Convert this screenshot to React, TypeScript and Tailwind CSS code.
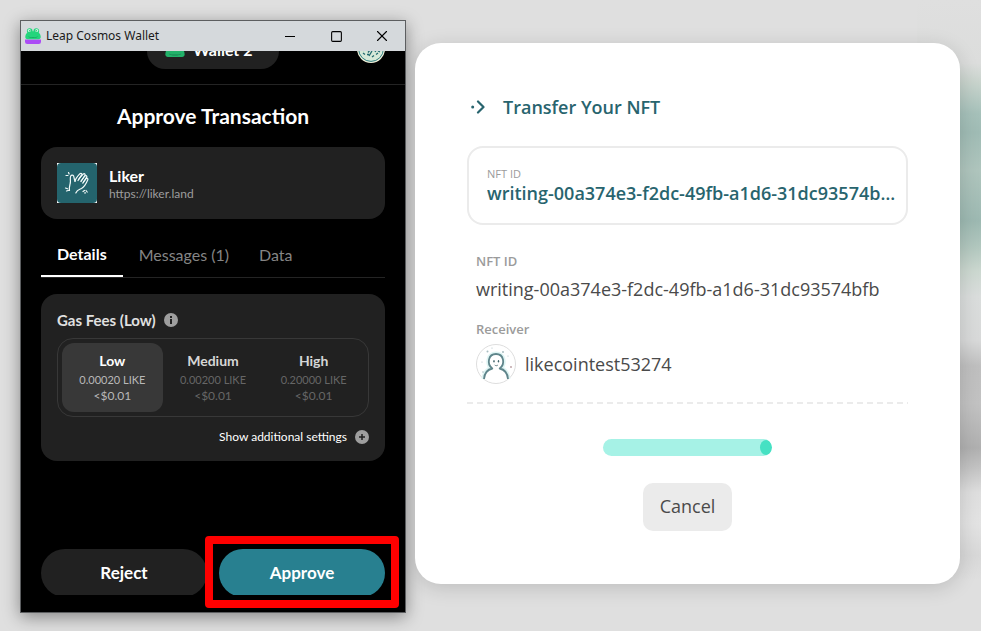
import React from "react";
import { Square, X } from "lucide-react";

const FEES = [
  { name: "Low", amount: "0.00020 LIKE", usd: "<$0.01" },
  { name: "Medium", amount: "0.00200 LIKE", usd: "<$0.01" },
  { name: "High", amount: "0.20000 LIKE", usd: "<$0.01" },
];

const TABS = ["Details", "Messages (1)", "Data"];

function FrogHead() {
  return (
    <g>
      <circle cx="4.7" cy="3" r="2.8" fill="#23d57c" />
      <circle cx="11.3" cy="3" r="2.8" fill="#23d57c" />
      <path d="M.3 9C.3 5.200 3 3.200 8 3.200S15.700 5.200 15.700 9c0 1.400-.8 2.200-2 2.200H2.300C1.100 11.200.3 10.400.3 9Z" fill="#23d57c" />
      <circle cx="4.300" cy="2.600" r="1.500" fill="#c9fbe2" />
      <circle cx="11.700" cy="2.600" r="1.500" fill="#c9fbe2" />
      <circle cx="4.800" cy="2.700" r=".7" fill="#23a566" />
      <circle cx="11.200" cy="2.700" r=".7" fill="#23a566" />
      <path d="M3 8.300C5 9.600 11 9.600 13 8.300c-.5 2.200-9.500 2.200-10 0Z" fill="#169c5c" />
    </g>
  );
}

function LeapLogo() {
  return (
    <svg viewBox="0 0 16 16" className="size-4" aria-hidden="true">
      <path d="M0 11.600h16v2.200a2.200 2.200 0 0 1-2.200 2.200H2.200A2.200 2.200 0 0 1 0 13.800Z" fill="#ab4cf5" />
      <FrogHead />
    </svg>
  );
}

function WalletIcon() {
  return (
    <svg viewBox="0 0 16 11.200" className="h-[14px] w-5" aria-hidden="true">
      <g opacity=".8">
        <FrogHead />
      </g>
    </svg>
  );
}

function LikerIcon() {
  return (
    <svg viewBox="0 0 40 40" className="size-10 shrink-0" aria-hidden="true">
      <rect width="40" height="40" fill="#fff" />
      <rect width="40" height="40" rx="4" fill="#24646d" />
      <g fill="none" stroke="#f3fbfa" strokeWidth="1.200" strokeLinecap="round" strokeLinejoin="round">
        <path d="M12.500 27.500c-.6-2.500.2-5 .8-7.500.5-2.500-.6-5 .4-7 .7-1.200 2.200-1.300 2.800-.2.700 1.400.6 3.700 1.500 5.200" />
        <path d="M18 18.500c.4-2.200 2.800-5.600 5-7.800 1-.9 2.400-.1 1.700 1.100l-3.200 4.700" />
        <path d="M21 17.500c1.500-2.300 3.500-5 5.300-6.500 1.200-.8 2.300.2 1.600 1.500L24 18.500" />
        <path d="m24 18 3.800-5c1.200-1 2.500-.1 1.900 1.200l-3.900 6" />
        <path d="m26.500 19 2.800-3.500c1-.8 2 0 1.500 1.200-1.600 3.800-3 7-6.300 8.800-2.200 1.100-4.400 1.500-5.700 4.500" />
        <path d="M9 12.500h2M11.500 9.500l.6 1.500M8.500 25l2 .8M9.500 28l2.500-.8" />
        <path d="m26 28.500 1.500-1M29 27.500l1.200 1.500M27.500 30l1-.2" />
      </g>
    </svg>
  );
}

function ReceiverAvatar() {
  return (
    <svg viewBox="0 0 40 40" className="size-10 shrink-0" aria-hidden="true">
      <circle cx="20" cy="20" r="19.500" fill="#fff" stroke="#dedede" />
      <g fill="none" stroke="#dff5f4" strokeWidth="5">
        <path d="M8 35c.5-6 3.500-9.500 8.300-10.500-5.800-4.200-4.200-14.500 3.700-14.500s9.500 10.300 3.700 14.500C28.500 25.500 31.500 29 32 35" />
      </g>
      <path d="M8 35c.5-6 3.500-9.500 8.300-10.500-5.800-4.200-4.200-14.500 3.700-14.500s9.500 10.300 3.700 14.500C28.500 25.500 31.500 29 32 35" fill="#fff" stroke="#5f858b" strokeWidth="1.800" strokeLinejoin="round" />
      <g fill="#40636a">
        <ellipse cx="18" cy="17.200" rx=".7" ry="1.300" />
        <ellipse cx="22.500" cy="17.200" rx=".7" ry="1.300" />
      </g>
      <path d="M18.700 21c1 .9 2.300.9 3.200 0" fill="none" stroke="#40636a" strokeWidth=".8" />
      <g fill="#a9bdc1">
        <circle cx="11.500" cy="7.500" r="1" />
        <circle cx="27" cy="8" r="1" />
        <circle cx="16" cy="4" r=".6" />
        <circle cx="6" cy="18" r=".6" />
        <circle cx="7" cy="28" r=".8" />
        <circle cx="32" cy="12" r=".6" />
      </g>
      <circle cx="35" cy="23" r=".9" fill="#b89a9f" />
    </svg>
  );
}

function ChainBadge() {
  return (
    <svg viewBox="0 0 28 28" className="size-7" aria-hidden="true">
      <circle cx="14" cy="14" r="14" fill="#f3f3dc" />
      <circle cx="14" cy="14" r="12.400" fill="#d7e9d8" stroke="#2f7f82" strokeWidth="1" />
      <path d="m6 18 2 1.500m3-2 2-2.500m-1 6 3-5m3 1 2-3m1 2 2 1m-8 5 2-1.500m-7-1h2m7 0 2-1.500M4.500 15l2 .5" stroke="#236a70" strokeWidth="1.300" fill="none" />
    </svg>
  );
}

function WalletWindow() {
  return (
    <section
      aria-label="Leap Cosmos Wallet"
      className="relative flex w-[386px] shrink-0 flex-col border border-[#5c5e60] bg-black font-['Lato',sans-serif] text-white shadow-[0_4px_16px_rgba(0,0,0,0.4)]"
    >
      <header className="flex h-[30px] items-center bg-[#d5d9dc] pl-1 text-black">
        <LeapLogo />
        <span className="ml-[5px] flex-1 font-['Noto_Sans','Open_Sans',sans-serif] text-xs text-[#1a1a1a]">Leap Cosmos Wallet</span>
        <button aria-label="Minimize" className="flex h-full w-[46px] items-center justify-center">
          <span className="h-px w-[10px] bg-black" />
        </button>
        <button aria-label="Maximize" className="flex h-full w-[46px] items-center justify-center">
          <Square size={13} strokeWidth={2} strokeLinejoin="miter" />
        </button>
        <button aria-label="Close" className="flex h-full w-[46px] items-center justify-center">
          <X size={18} strokeWidth={1.5} />
        </button>
      </header>

      <div className="flex h-[34px] items-end overflow-hidden border-b border-[#242424] px-5 pb-[15px]">
        <div className="grid h-9 flex-1 grid-cols-[1fr_auto_1fr]">
          <span />
          <button className="flex h-9 w-[132px] items-center gap-2 rounded-full bg-[#212121] pb-[3px] pl-[18px] text-base font-bold">
            <WalletIcon />
            Wallet 2
          </button>
          <span className="flex items-center justify-end pb-1">
            <ChainBadge />
          </span>
        </div>
      </div>

      <main className="flex flex-1 flex-col px-5 pt-[15px] pb-[17px]">
        <h1 className="text-center text-[21px] leading-8 font-bold">Approve Transaction</h1>

        <div className="mt-[15px] flex items-center gap-3 rounded-2xl bg-[#212121] p-4">
          <LikerIcon />
          <div className="pt-1">
            <p className="text-base leading-[18px] font-bold">Liker</p>
            <p className="text-xs leading-[18px] text-[#9e9e9e]">https://liker.land</p>
          </div>
        </div>

        <div role="tablist" className="mt-[14px] flex border-b border-[#242424]">
          {TABS.map((tab, i) => (
            <button
              key={tab}
              role="tab"
              aria-selected={i === 0}
              className={
                i === 0
                  ? "-mb-px h-11 border-b-2 border-white px-4 text-base font-bold"
                  : "h-11 pr-[14px] pl-4 text-base text-[#858585]"
              }
            >
              {tab}
            </button>
          ))}
        </div>

        <div className="mt-4 rounded-2xl bg-[#212121] px-4 pt-4 pb-[14px]">
          <div className="flex h-5 items-center gap-2 text-[15px] font-bold text-[#e0e0e0]">
            Gas Fees (Low)
            <svg viewBox="0 0 14 14" className="size-[14px]" aria-hidden="true">
              <circle cx="7" cy="7" r="7" fill="#9e9e9e" />
              <path d="M6 3h2v2H6zM6 6h2v5H6z" fill="#212121" />
            </svg>
          </div>
          <div className="mt-2 grid grid-cols-3 rounded-2xl border border-[#383838] p-1">
            {FEES.map((fee, i) => (
              <button
                key={fee.name}
                className={
                  i === 0
                    ? "flex h-[69px] flex-col items-center rounded-xl bg-[#383838] pt-2 text-[#b8b8b8]"
                    : "flex h-[69px] flex-col items-center rounded-xl pt-2 text-[#666666]"
                }
              >
                <span className={i === 0 ? "text-sm leading-5 font-bold text-white" : "text-sm leading-5 font-bold text-[#d6d6d6]"}>
                  {fee.name}
                </span>
                <span className="text-[11px] leading-[18px]">{fee.amount}</span>
                <span className="text-xs leading-[14px]">{fee.usd}</span>
              </button>
            ))}
          </div>
          <div className="mt-[10px] flex justify-end">
            <button className="flex h-5 items-center gap-2 text-xs">
              Show additional settings
              <svg viewBox="0 0 14 14" className="size-[14px]" aria-hidden="true">
                <circle cx="7" cy="7" r="7" fill="#9e9e9e" />
                <path d="M7 4v6M4 7h6" stroke="#212121" strokeWidth="1.500" />
              </svg>
            </button>
          </div>
        </div>

        <div className="mt-auto grid grid-cols-2 gap-3">
          <div className="h-[46px] overflow-hidden">
            <button className="h-12 w-full rounded-full bg-[#212121] text-[17px] font-bold">Reject</button>
          </div>
          <div className="relative">
            <div className="h-[46px] overflow-hidden">
              <button className="h-12 w-full rounded-full bg-[#288090] text-[17px] font-bold">Approve</button>
            </div>
            <div className="pointer-events-none absolute -inset-x-[14px] -inset-y-[13px] rounded border-8 border-[#ff0000]" />
          </div>
        </div>
      </main>
    </section>
  );
}

function TransferCard() {
  return (
    <section className="relative mt-[23px] flex min-w-0 flex-1 flex-col self-start rounded-[26px] bg-white px-[52px] pt-[50px] pb-[53px] text-[#4a4a4a] shadow-[0_4px_20px_rgba(0,0,0,0.15)]">
      <h2 className="flex items-center gap-[18px] pl-1 text-lg leading-7 font-semibold text-[#28646e]">
        <svg viewBox="0 0 14 14" className="size-[14px]" aria-hidden="true">
          <circle cx="1.700" cy="7" r="1.500" fill="#28646e" />
          <path d="m7 1.500 5.500 5.500L7 12.500" fill="none" stroke="#28646e" strokeWidth="2.200" strokeLinecap="round" strokeLinejoin="round" />
        </svg>
        Transfer Your NFT
      </h2>

      <div className="mt-[25px] rounded-2xl border-2 border-[#ebebeb] py-[18px] pr-2 pl-[18px]">
        <p className="text-[11px] leading-4 text-[#9b9b9b]">NFT ID</p>
        <p className="truncate text-lg leading-[23px] font-semibold text-[#28646e]">
          writing-00a374e3-f2dc-49fb-a1d6-31dc93574bfb
        </p>
      </div>

      <dl className="mt-[27px] px-[9px]">
        <dt className="text-[13px] leading-[18px] font-semibold text-[#9b9b9b]">NFT ID</dt>
        <dd className="mt-[3px] text-lg leading-8">writing-00a374e3-f2dc-49fb-a1d6-31dc93574bfb</dd>
        <dt className="mt-[15px] text-[13px] leading-[18px] font-semibold text-[#9b9b9b]">Receiver</dt>
        <dd className="mt-[6px] flex items-center gap-[9px] text-lg">
          <ReceiverAvatar />
          likecointest53274
        </dd>
      </dl>

      <div className="mt-[18px] h-0.5 bg-[repeating-linear-gradient(to_right,#ebebeb_0_6px,transparent_6px_10px)]" />

      <div role="progressbar" aria-label="Transfer in progress" className="mt-[35px] flex h-[17px] w-[169px] items-center justify-end self-center overflow-hidden rounded-full bg-[#a6f2e6]">
        <span className="h-[15px] w-3 rounded-[50%] bg-[#46e1c3]" />
      </div>

      <button className="mt-[27px] h-12 self-center rounded-[10px] bg-[#ebebeb] px-[17px] pb-0.5 text-lg">Cancel</button>
    </section>
  );
}

export default function App() {
  return (
    <div className="relative flex min-h-screen items-stretch gap-[9px] overflow-hidden bg-[#dfdfdf] pt-5 pr-[21px] pb-[18px] pl-5 font-['Open_Sans',sans-serif]">
      <div className="absolute inset-y-0 right-0 w-16 bg-[linear-gradient(to_bottom,#dfdfdf_0%,#dcdddc_10%,#c9d4cd_13%,#a6c1ba_18%,#a0bcb5_21%,#afc5bd_27%,#9db9b2_35%,#b1c7be_39%,#ccd8d0_43%,#dadddc_47%,#d8d9d9_54%,#bfbfbf_58%,#c2c2c2_64%,#b0b0b0_71%,#c2c2c2_74%,#dedede_78%,#e3e3e3_83%,#d8d8d8_88%,#dfdfdf_92%,#dfdfdf_100%)]" />
      <WalletWindow />
      <TransferCard />
    </div>
  );
}
